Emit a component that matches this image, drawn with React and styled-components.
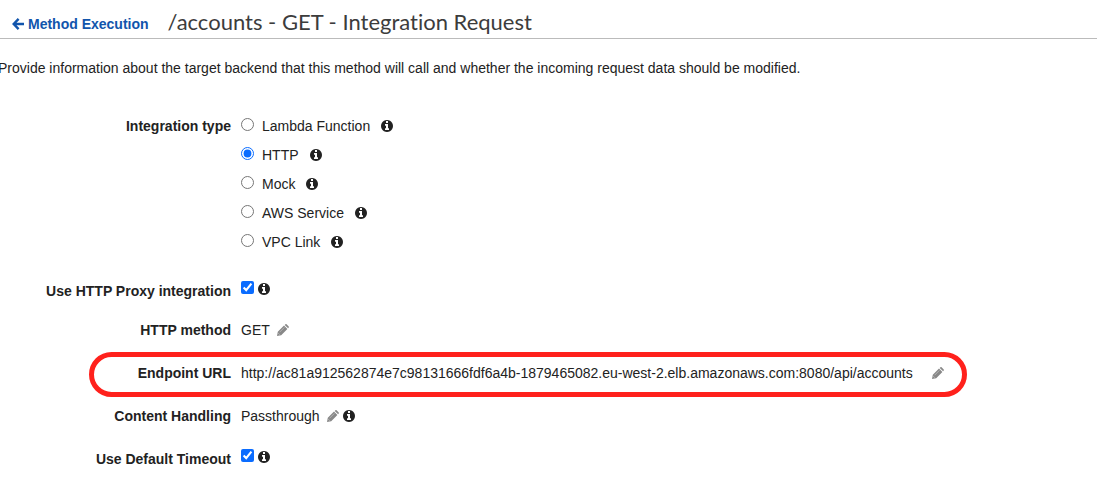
import React from "react";
import styled, { createGlobalStyle } from "styled-components";

const GlobalStyle = createGlobalStyle`
  * { box-sizing: border-box; }
  body {
    margin: 0;
    background: #fff;
    color: #222;
    font: 14px/20px "Liberation Sans", Arial, sans-serif;
    overflow-x: hidden;
  }
`;

const Header = styled.header`
  display: flex;
  align-items: center;
  gap: 19px;
  padding: 6px 12px 0;
  height: 39px;
  border-bottom: 1px solid #bbb;
`;

const BackLink = styled.a`
  display: flex;
  align-items: center;
  gap: 4px;
  padding-top: 4px;
  color: #1155ac;
  font-weight: bold;
  text-decoration: none;
  white-space: nowrap;
`;

const Title = styled.h1`
  margin: 0;
  color: #3c3c3c;
  font: 400 22px/32px Lato, sans-serif;
  font-variant-ligatures: none;
  white-space: nowrap;
`;

const Intro = styled.p`
  margin: 19px 0 0 -2px;
`;

const Form = styled.form`
  margin-top: 33px;
  padding-bottom: 16px;
`;

const Row = styled.div`
  position: relative;
  display: grid;
  grid-template-columns: 231px 1fr;
  column-gap: 10px;
  width: fit-content;
  min-height: 20px;
  margin-bottom: ${(p) => p.$gap ?? 23}px;
`;

const RadioGroup = styled.fieldset`
  display: grid;
  grid-template-columns: 231px 1fr;
  column-gap: 10px;
  margin: 0 0 25px;
  padding: 0;
  border: 0;
`;

const Label = styled.label`
  font-weight: bold;
  text-align: right;
  white-space: nowrap;
`;

const GroupLabel = styled.span`
  padding-top: 5px;
  font-weight: bold;
  text-align: right;
`;

const Name = styled.span`
  font-weight: bold;
  text-align: right;
`;

const Options = styled.div`
  display: flex;
  flex-direction: column;
`;

const Option = styled.div`
  display: flex;
  align-items: center;
  height: 29px;
`;

const OptionLabel = styled.label`
  display: flex;
  align-items: center;
  gap: 8px;
  margin-right: 11px;
`;

const Tick = styled.input`
  flex: none;
  width: 13px;
  height: 13px;
  margin: 0 0 ${(p) => (p.type === "radio" ? 3 : 4)}px;
  accent-color: #0a6cff;
`;

const Value = styled.div`
  display: flex;
  align-items: center;
  white-space: nowrap;
`;

const Url = styled.span`
  min-width: 684px;
`;

const IconButton = styled.button`
  display: flex;
  margin-left: ${(p) => p.$space ?? 0}px;
  padding: 0;
  border: 0;
  background: none;
  color: ${(p) => p.$color || "#222"};
  cursor: pointer;
`;

const CheckValue = styled(Value)`
  gap: 4px;
  height: 16px;
`;

const Highlight = styled.span`
  position: absolute;
  inset: -11px -23px -14px 89px;
  border: 5px solid #ff211c;
  border-radius: 23px;
  pointer-events: none;
`;

const ArrowIcon = () => (
  <svg width="12" height="12" viewBox="0 0 12 12" fill="none" stroke="currentColor" strokeWidth="2.4" aria-hidden="true">
    <path d="M6.6 .9 1.7 6l4.9 5.1M2 6h10" />
  </svg>
);

const InfoIcon = () => (
  <svg width="12" height="12" viewBox="0 128 1536 1536" fill="currentColor" aria-hidden="true">
    <path d="M1024 1376v-160q0-14-9-23t-23-9h-96v-512q0-14-9-23t-23-9h-320q-14 0-23 9t-9 23v160q0 14 9 23t23 9h96v320h-96q-14 0-23 9t-9 23v160q0 14 9 23t23 9h448q14 0 23-9t9-23zm-128-896v-192q0-14-9-23t-23-9h-192q-14 0-23 9t-9 23v192q0 14 9 23t23 9h192q14 0 23-9t9-23zm640 416q0 209-103 385.5t-279.5 279.5-385.5 103-385.5-103-279.5-279.5-103-385.5 103-385.5 279.5-279.5 385.5-103 385.5 103 279.5 279.5 103 385.5z" />
  </svg>
);

const PencilIcon = () => (
  <svg width="12" height="12" viewBox="0 0 12 12" aria-hidden="true">
    <path fill="currentColor" d="M0 12 .8 7.8 7 1.6l3.4 3.4-6.2 6.2zM7.7 .9 8.4.3q.6-.5 1.2 0l2.1 2.1q.5.6 0 1.2l-.6.7z" />
    <path stroke="#fff" strokeWidth=".6" fill="none" d="m2.6 8.2 4.8-4.8M1.2 9.1l1.7 1.7" opacity=".6" />
  </svg>
);

const Info = ({ about, space }) => (
  <IconButton type="button" aria-label={`About ${about}`} $space={space}>
    <InfoIcon />
  </IconButton>
);

const Edit = ({ what }) => (
  <IconButton type="button" aria-label={`Edit ${what}`} $space={7} $color="#888">
    <PencilIcon />
  </IconButton>
);

const types = ["Lambda Function", "HTTP", "Mock", "AWS Service", "VPC Link"];

const CheckRow = ({ id, label, gap }) => (
  <Row $gap={gap}>
    <Label htmlFor={id}>{label}</Label>
    <CheckValue>
      <Tick type="checkbox" id={id} defaultChecked />
      <Info about={label} />
    </CheckValue>
  </Row>
);

export default function App() {
  return (
    <>
      <GlobalStyle />
      <Header>
        <BackLink href="#method-execution">
          <ArrowIcon />
          Method Execution
        </BackLink>
        <Title>/accounts - GET - Integration Request</Title>
      </Header>
      <main>
        <Intro>
          Provide information about the target backend that this method will call and whether the incoming request data
          should be modified.
        </Intro>
        <Form>
          <RadioGroup aria-labelledby="integration-type">
            <GroupLabel id="integration-type">Integration type</GroupLabel>
            <Options>
              {types.map((type) => (
                <Option key={type}>
                  <OptionLabel>
                    <Tick type="radio" name="type" defaultChecked={type === "HTTP"} />
                    {type}
                  </OptionLabel>
                  <Info about={type} />
                </Option>
              ))}
            </Options>
          </RadioGroup>
          <CheckRow id="proxy" label="Use HTTP Proxy integration" gap={19} />
          <Row>
            <Name>HTTP method</Name>
            <Value>
              GET
              <Edit what="HTTP method" />
            </Value>
          </Row>
          <Row>
            <Name>Endpoint URL</Name>
            <Value>
              <Url>http://ac81a912562874e7c98131666fdf6a4b-1879465082.eu-west-2.elb.amazonaws.com:8080/api/accounts</Url>
              <Edit what="endpoint URL" />
            </Value>
            <Highlight />
          </Row>
          <Row>
            <Name>Content Handling</Name>
            <Value>
              Passthrough
              <Edit what="content handling" />
              <Info about="content handling" space={4} />
            </Value>
          </Row>
          <CheckRow id="timeout" label="Use Default Timeout" gap={0} />
        </Form>
      </main>
    </>
  );
}
